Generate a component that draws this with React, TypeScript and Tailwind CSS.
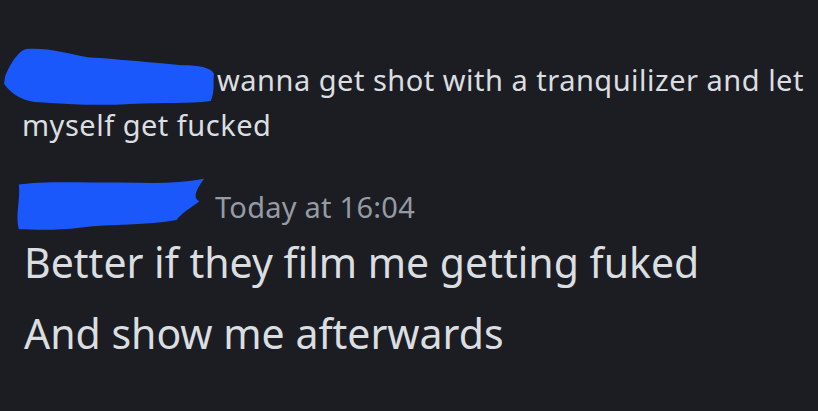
const font = { fontFamily: '"Noto Sans", "Open Sans", sans-serif' };

function Scribble({ className, d }: { className: string; d: string }) {
  return (
    <svg viewBox="0 0 200 60" preserveAspectRatio="none" className={className} aria-hidden="true">
      <path d={d} fill="#1b58fb" />
    </svg>
  );
}

export default function App() {
  return (
    <div className="w-[818px] h-[411px] bg-[#1c1d22] overflow-hidden text-[#dbdee1]" style={font}>
      <div className="pl-[22px] pr-2 pt-[57px]">
        {/* first message, name scribbled over */}
        <p className="relative text-[29px] leading-[45px] tracking-[0.5px]">
          <Scribble
            className="absolute -left-[19px] -top-[12px] w-[212px] h-[61px]"
            d="M2 31 C6 20 14 6 22 4 C40 2 60 8 80 12 C110 14 150 18 170 20 C185 20 195 22 199 28 C198 38 200 46 196 55 C175 58 150 56 120 58 C90 60 60 58 30 56 C16 54 6 46 1 38 Z"
          />
          <span className="inline-block w-[195px]" />
          wanna get shot with a tranquilizer and let myself get fucked
        </p>

        <div className="mt-[33px] flex items-center h-[54px]">
          <Scribble
            className="-ml-[7px] w-[190px] h-[56px] -mt-[4px]"
            d="M4 8 C30 4 70 6 110 6 C140 6 170 8 199 2 C192 12 186 22 194 26 C184 34 176 38 170 46 C140 52 100 50 70 54 C40 58 18 56 4 56 C0 40 6 24 4 8 Z"
          />
          <span className="ml-[10px] text-[29px] tracking-[0.25px] text-[#949ba4]">Today at 16:04</span>
        </div>

        <p className="mt-[2px] text-[41px] leading-[52px] pl-[2px]">Better if they film me getting fuked</p>
        <p className="mt-[19px] text-[41px] leading-[52px] pl-[2px]">And show me afterwards</p>
      </div>
    </div>
  );
}
